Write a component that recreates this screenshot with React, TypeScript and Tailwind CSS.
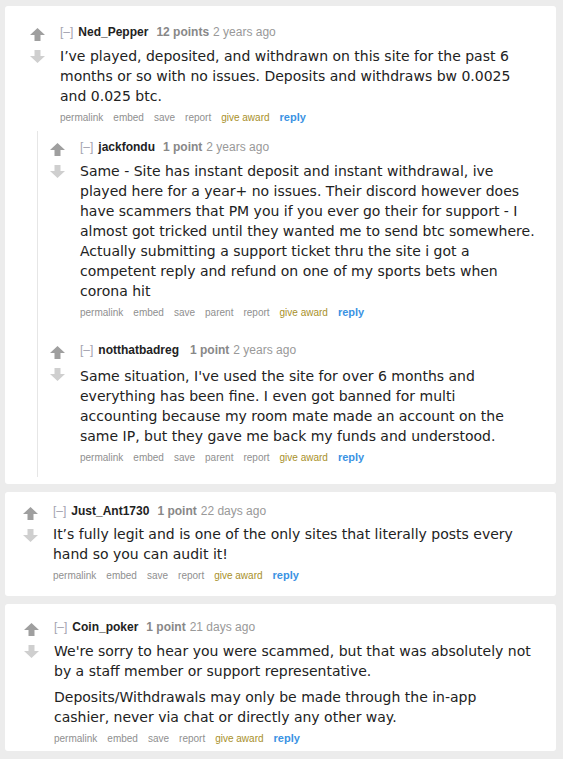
import React from 'react';

type CommentProps = {
  author: string;
  points: string;
  age: string;
  paragraphs: string[][];
  hasParent?: boolean;
  bodyGap?: string;
  nameGap?: string;
};

const Arrow = ({ down, color }: { down?: boolean; color: string }) => (
  <svg width="15" height="13" viewBox="0 0 15 13" className={down ? 'rotate-180' : ''}>
    <path d="M7.5 0 L15 7 L10.5 7 L10.5 13 L4.5 13 L4.5 7 L0 7 Z" fill={color} />
  </svg>
);

const Comment = ({
  author,
  points,
  age,
  paragraphs,
  hasParent,
  bodyGap = 'mt-[6px]',
  nameGap = 'mr-[8px]',
}: CommentProps) => {
  const buttons = hasParent
    ? ['permalink', 'embed', 'save', 'parent', 'report']
    : ['permalink', 'embed', 'save', 'report'];

  return (
    <div className="flex">
      {/* vote arrows */}
      <div className="flex flex-col items-center w-[15px] pt-[4px] gap-[9px] shrink-0">
        <Arrow color="#9f9f9f" />
        <Arrow down color="#cfcfcf" />
      </div>

      <div className="ml-[15px] flex-1 min-w-0">
        {/* tagline */}
        <div className="flex items-center h-[16px] text-[12px] font-['Liberation_Sans',Arial,sans-serif] whitespace-nowrap">
          <span className="text-[#a3a3b0] mr-[5px]">[–]</span>
          <span className={`font-bold text-[#222] ${nameGap}`}>{author}</span>
          <span className="font-bold text-[#888]">{points}</span>
          <span className="text-[#999] ml-[4px]">{age}</span>
        </div>

        {/* body */}
        <div className={`${bodyGap} text-[14px] leading-[20px] text-[#222] font-['DejaVu_Sans',Verdana,sans-serif] flex flex-col gap-[6px]`}>
          {paragraphs.map((lines, i) => (
            <p key={i}>
              {lines.map((line, j) => (
                <span key={j} className="block whitespace-nowrap">
                  {line}
                </span>
              ))}
            </p>
          ))}
        </div>

        {/* buttons */}
        <div className="mt-[3px] h-[16px] flex items-center gap-[10px] text-[10px] font-['Liberation_Sans',Arial,sans-serif] whitespace-nowrap">
          {buttons.map((b) => (
            <span key={b} className="text-[#8f8f8f]">
              {b}
            </span>
          ))}
          <span className="text-[#a8902a]">give award</span>
          <span className="text-[11px] font-bold text-[#3b93e3]">reply</span>
        </div>
      </div>
    </div>
  );
};

export default function App() {
  return (
    <div className="min-h-[759px] w-[563px] bg-[#ececec] pt-[6px] pb-[7px] flex flex-col gap-[8px]">
      {/* Card 1 with replies */}
      <div className="ml-[5px] mr-[7px] bg-white rounded-[3px] pt-[18px] pb-[7px]">
        <div className="pl-[25px]">
          <Comment
            author="Ned_Pepper"
            points="12 points"
            age="2 years ago"
            paragraphs={[
              [
                'I’ve played, deposited, and withdrawn on this site for the past 6',
                'months or so with no issues. Deposits and withdraws bw 0.0025',
                'and 0.025 btc.',
              ],
            ]}
          />
        </div>

        {/* child replies */}
        <div className="ml-[32px] mt-[6px] border-l border-[#e6e6e6] pl-[12px] pt-[8px] pb-[12px]">
          <Comment
            author="jackfondu"
            points="1 point"
            age="2 years ago"
            hasParent
            paragraphs={[
              [
                'Same - Site has instant deposit and instant withdrawal, ive',
                'played here for a year+ no issues. Their discord however does',
                'have scammers that PM you if you ever go their for support - I',
                'almost got tricked until they wanted me to send btc somewhere.',
                'Actually submitting a support ticket thru the site i got a',
                'competent reply and refund on one of my sports bets when',
                'corona hit',
              ],
            ]}
          />
          <div className="mt-[22px]">
            <Comment
              author="notthatbadreg"
              points="1 point"
              age="2 years ago"
              hasParent
              bodyGap="mt-[8px]"
              nameGap="mr-[11px]"
              paragraphs={[
                [
                  "Same situation, I've used the site for over 6 months and",
                  'everything has been fine. I even got banned for multi',
                  'accounting because my room mate made an account on the',
                  'same IP, but they gave me back my funds and understood.',
                ],
              ]}
            />
          </div>
        </div>
      </div>

      {/* Card 2 */}
      <div className="ml-[5px] mr-[7px] bg-white rounded-[3px] pt-[11px] pb-[13px] pl-[18px]">
        <Comment
          author="Just_Ant1730"
          points="1 point"
          age="22 days ago"
          bodyGap="mt-[5px]"
          paragraphs={[
            [
              'It’s fully legit and is one of the only sites that literally posts every',
              'hand so you can audit it!',
            ],
          ]}
        />
      </div>

      {/* Card 3 */}
      <div className="ml-[5px] mr-[7px] bg-white rounded-[3px] pt-[15px] pb-[5px] pl-[19px]">
        <Comment
          author="Coin_poker"
          points="1 point"
          age="21 days ago"
          paragraphs={[
            [
              "We're sorry to hear you were scammed, but that was absolutely not",
              'by a staff member or support representative.',
            ],
            [
              'Deposits/Withdrawals may only be made through the in-app',
              'cashier, never via chat or directly any other way.',
            ],
          ]}
        />
      </div>
    </div>
  );
}
